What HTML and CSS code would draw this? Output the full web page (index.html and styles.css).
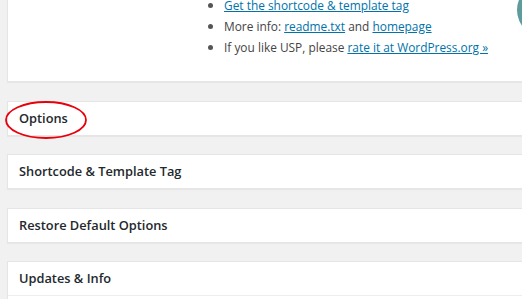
FILE: index.html
```html
<!DOCTYPE html>
<html lang="en">
<head>
<meta charset="UTF-8">
<meta name="viewport" content="width=device-width, initial-scale=1.0">
<title>USP Settings</title>
<link rel="stylesheet" href="styles.css">
</head>
<body>

<div class="wrap">

<div class="postbox intro">
  <ul class="info-list">
    <li><a href="#">Get the shortcode &amp; template tag</a></li>
    <li>More info: <a href="#">readme.txt</a> and <a href="#">homepage</a></li>
    <li>If you like USP, please <a href="#">rate it at WordPress.org &raquo;</a></li>
  </ul>
  <svg class="logo" width="40" height="40" viewBox="0 0 40 40">
    <circle cx="28" cy="10" r="27" fill="#5e9b9c"/>
  </svg>
</div>

<div class="postbox">
  <h2 class="hndle">Options</h2>
  <svg class="marker" width="86" height="42" viewBox="0 0 86 42">
    <ellipse cx="43" cy="20" rx="40" ry="18" fill="none" stroke="#e8000b" stroke-width="1.8"/>
  </svg>
</div>

<div class="postbox">
  <h2 class="hndle">Shortcode &amp; Template Tag</h2>
</div>

<div class="postbox">
  <h2 class="hndle">Restore Default Options</h2>
</div>

<div class="postbox open">
  <h2 class="hndle">Updates &amp; Info</h2>
  <div class="inside"></div>
</div>

</div>

</body>
</html>
```

FILE: styles.css
```css
body {
  margin: 0;
  background-color: #f1f1f1;
  font-family: "Open Sans", "Liberation Sans", sans-serif;
  color: #444;
  overflow: hidden;
}

.wrap {
  padding-left: 7px;
  margin-right: -30px;
}

.postbox {
  position: relative;
  background-color: #fff;
  border: 1px solid #e5e5e5;
  box-shadow: 0 1px 1px rgba(0, 0, 0, 0.04);
  margin-bottom: 18.33px;
}

.intro {
  margin-top: -7px;
  margin-bottom: 19px;
}

.info-list {
  margin: 0;
  padding: 1px 0 23px 216px;
  font-size: 11.9px;
  line-height: 21px;
  list-style: disc;
}

.info-list li::marker {
  color: #555;
  font-size: 13px;
}

.info-list a {
  color: #0073aa;
  text-decoration: underline;
}

.logo {
  position: absolute;
  top: 6px;
  left: 508px;
}

.hndle {
  margin: 0;
  padding: 8px 11px;
  font-size: 12.8px;
  font-weight: 600;
  line-height: 17px;
  color: #23282d;
}

.marker {
  position: absolute;
  top: -2px;
  left: -5px;
}

.open .hndle {
  border-bottom: 1px solid #eee;
}

.inside {
  height: 40px;
}
```
